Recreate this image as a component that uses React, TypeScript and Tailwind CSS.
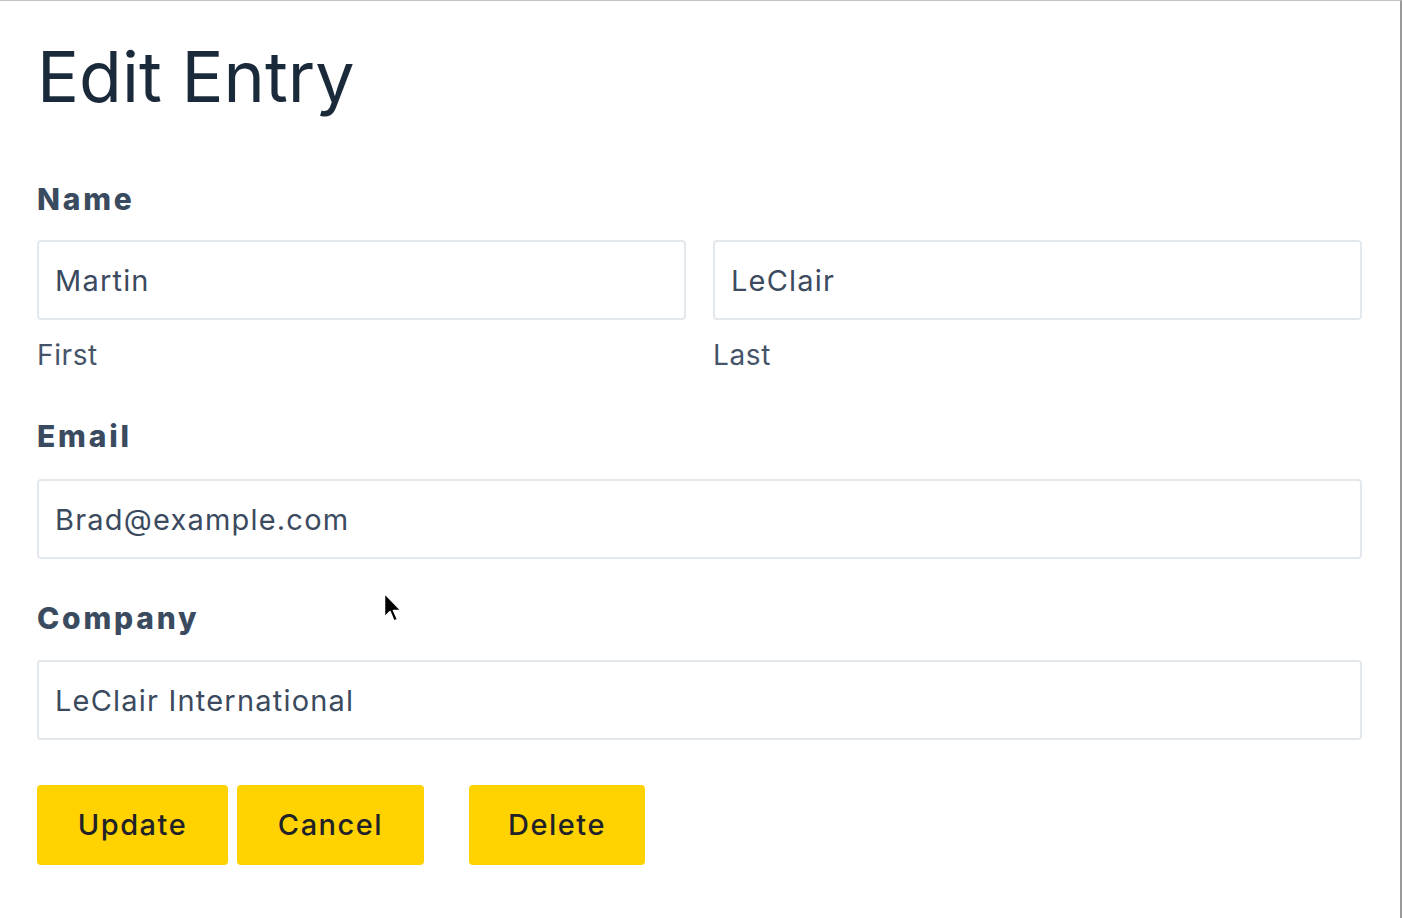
import React from 'react';

const Field = ({ value }: { value: string }) => (
  <input
    type="text"
    defaultValue={value}
    className="h-[80px] w-full rounded-[4px] border-2 border-[#e3e8ed] bg-white px-[16px] text-[29px] tracking-[1.2px] text-[#3b4a5e] outline-none"
  />
);

const Label = ({ children }: { children: React.ReactNode }) => (
  <label className="block text-[30px] font-extrabold leading-[30px] tracking-[2.8px] text-[#3a4a5f]">{children}</label>
);

const Button = ({ children, width }: { children: React.ReactNode; width: string }) => (
  <button className={`h-[80px] ${width} rounded-[4px] bg-[#ffd200] text-[29px] font-medium tracking-[1.5px] text-[#1f2328]`}>
    {children}
  </button>
);

export default function App() {
  return (
    <div className="relative min-h-[918px] w-[1402px] border-t border-r-2 border-t-[#c4c4c4] border-r-[#9a9a9a] bg-white font-['Inter',sans-serif]">
      <div className="pl-[37px] pr-[38px] pt-[40px]">
        <h1 className="text-[70px] font-normal leading-[72px] text-[#1b2a3b]">Edit Entry</h1>

        <div className="mt-[71px]">
          <Label>Name</Label>
          <div className="mt-[26px] grid grid-cols-2 gap-[27px]">
            <div>
              <Field value="Martin" />
              <p className="mt-[21px] text-[28px] leading-[28px] tracking-[0.6px] text-[#46546a]">First</p>
            </div>
            <div>
              <Field value="LeClair" />
              <p className="mt-[21px] text-[28px] leading-[28px] tracking-[0.6px] text-[#46546a]">Last</p>
            </div>
          </div>
        </div>

        <div className="mt-[52px]">
          <Label>Email</Label>
          <div className="mt-[28px]">
            <Field value="Brad@example.com" />
          </div>
        </div>

        <div className="mt-[44px]">
          <Label>Company</Label>
          <div className="mt-[27px]">
            <Field value="LeClair International" />
          </div>
        </div>

        <div className="mt-[45px] flex">
          <Button width="w-[191px]">Update</Button>
          <div className="ml-[9px]">
            <Button width="w-[187px]">Cancel</Button>
          </div>
          <div className="ml-[45px]">
            <Button width="w-[176px]">Delete</Button>
          </div>
        </div>
      </div>

      <svg
        className="pointer-events-none absolute left-[383px] top-[591px]"
        width="20"
        height="34"
        viewBox="0 0 20 34"
      >
        <path d="M1.5 1.5 L1.5 25 L7 19.5 L11 29 L14.5 27.5 L10.5 18.5 L18 18.5 Z" fill="#000" stroke="#fff" strokeWidth="1.5" strokeLinejoin="round" />
      </svg>
    </div>
  );
}
